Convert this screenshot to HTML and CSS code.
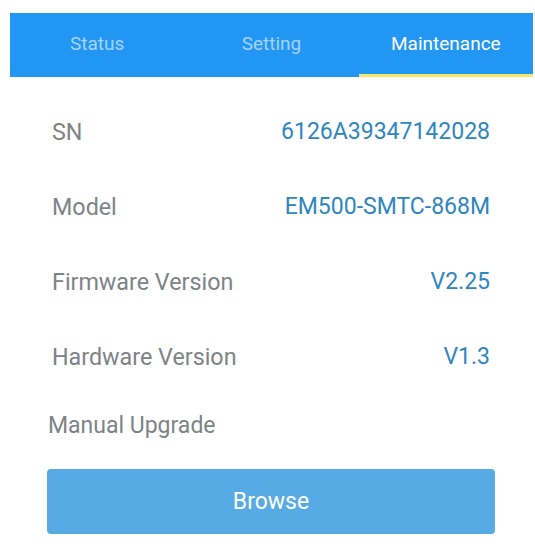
FILE: index.html
```html
<!DOCTYPE html>
<html>
<head>
<meta charset="utf-8">
<link rel="stylesheet" href="styles.css">
</head>
<body>
<div class="tabs">
  <div class="tab">Status</div>
  <div class="tab">Setting</div>
  <div class="tab active">Maintenance</div>
</div>
<div class="info">
  <div class="row"><span class="label">SN</span><span class="value">6126A39347142028</span></div>
  <div class="row"><span class="label">Model</span><span class="value">EM500-SMTC-868M</span></div>
  <div class="row"><span class="label">Firmware Version</span><span class="value">V2.25</span></div>
  <div class="row"><span class="label">Hardware Version</span><span class="value">V1.3</span></div>
</div>
<div class="upgrade">
  <div class="upgrade-title">Manual Upgrade</div>
  <div class="browse">Browse</div>
</div>
</body>
</html>
```
FILE: styles.css
```css
html, body {
  margin: 0;
  padding: 0;
  background: #ffffff;
  font-family: Roboto, "Liberation Sans", sans-serif;
}
.tabs {
  margin: 13px 2px 0 10px;
  height: 64px;
  background: #2196f3;
  display: grid;
  grid-template-columns: 1fr 1fr 1fr;
}
.tab {
  display: flex;
  align-items: center;
  justify-content: center;
  color: rgba(255, 255, 255, 0.6);
  font-size: 19px;
  padding-bottom: 4px;
  box-sizing: border-box;
}
.tab.active {
  color: #ffffff;
  border-bottom: 3px solid #f5e96b;
  padding-bottom: 1px;
}
.info {
  margin-top: 17px;
  padding: 0 45px 0 52px;
}
.row {
  height: 75px;
  display: flex;
  align-items: center;
  justify-content: space-between;
}
.label {
  color: #7d8386;
  font-size: 23.3px;
}
.value {
  color: #2e86c1;
  font-size: 23px;
}
.upgrade {
  padding: 0 40px 0 47px;
}
.upgrade-title {
  color: #7d8386;
  font-size: 23px;
  padding-left: 1px;
  margin-top: 18px;
  line-height: 28px;
}
.browse {
  margin-top: 29px;
  height: 65px;
  border-radius: 4px;
  background: #56abe4;
  color: #ffffff;
  font-size: 23px;
  display: flex;
  align-items: center;
  justify-content: center;
}
```
